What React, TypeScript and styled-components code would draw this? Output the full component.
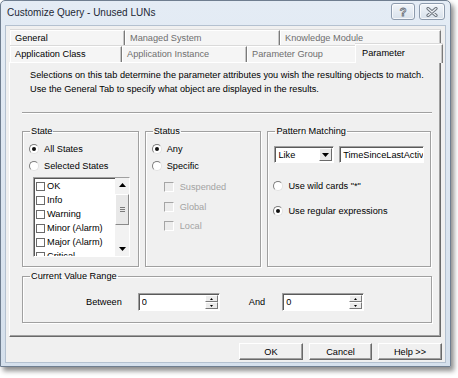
import styled, { createGlobalStyle } from 'styled-components'

const GlobalStyle = createGlobalStyle`
  body {
    margin: 0;
    background: #ffffff;
    font-family: "Liberation Sans", Arial, sans-serif;
    font-size: 9.2px;
    color: #000;
  }
`

const Page = styled.div`
  width: 458px;
  height: 378px;
  overflow: hidden;
`

const Window = styled.div`
  width: 451px;
  height: 367px;
  box-sizing: border-box;
  border: 1px solid #6f7e90;
  border-radius: 5px 5px 0 0;
  background: linear-gradient(#e4ecf5, #d5e0ec);
  box-shadow: 3px 4px 5px rgba(0, 0, 0, 0.45);
  display: flex;
  flex-direction: column;
  padding: 0 4px 3px 4px;
`

const TitleBar = styled.div`
  height: 24px;
  display: flex;
  justify-content: space-between;
  align-items: flex-start;
  padding: 0 1px 0 2px;
`

const Title = styled.div`
  font-size: 10px;
  line-height: 24px;
  color: #1d2835;
`

const CaptionButtons = styled.div`
  display: flex;
  gap: 4px;
  margin-top: 2px;
`

const CaptionButton = styled.div<{ $w: number }>`
  width: ${p => p.$w}px;
  height: 17px;
  box-sizing: border-box;
  border: 1px solid #8d9bad;
  border-radius: 3px;
  background: linear-gradient(#f1f5f9, #d8e1eb);
  box-shadow: inset 0 0 0 1px rgba(255, 255, 255, 0.7);
  display: flex;
  align-items: center;
  justify-content: center;
  font-size: 11px;
  font-weight: bold;
  color: #eef2f6;
  -webkit-text-stroke: 0.8px #6c737c;
`

const Client = styled.div`
  flex: 1;
  background: #f0f0f0;
  border: 1px solid #b4c1d0;
  padding: 4px 3px 2px 3px;
  display: flex;
  flex-direction: column;
`

const TabRow = styled.div`
  display: flex;
  height: 16px;
  margin-left: 1px;
`

const Tab = styled.div<{ $w: number; $muted?: boolean }>`
  width: ${p => p.$w}px;
  box-sizing: border-box;
  padding-left: 4px;
  background: #f5f5f5;
  border-top: 1px solid #fff;
  border-left: 1px solid #fff;
  border-right: 1px solid #7a7a7a;
  box-shadow: inset -1px 0 #c6c6c6, 0 -1px #dadada;
  line-height: 14px;
  color: ${p => (p.$muted ? '#6e6e6e' : '#000')};
  white-space: nowrap;
`

const ActiveTab = styled(Tab)`
  margin: -2px -2px -1px -2px;
  padding-left: 6px;
  height: 19px;
  background: #f0f0f0;
  line-height: 17px;
  z-index: 1;
`

const Panel = styled.div`
  width: 432px;
  height: 275px;
  box-sizing: border-box;
  background: #f0f0f0;
  border: 1px solid;
  border-color: #fff #696969 #696969 #fff;
  box-shadow: inset -1px -1px #a0a0a0;
  padding: 5px 9px 0 12px;
  display: flex;
  flex-direction: column;
`

const Description = styled.div`
  padding-left: 8px;
  line-height: 14px;
`

const Separator = styled.div`
  margin-top: 16px;
  margin-right: -1px;
  border-top: 1px solid #a0a0a0;
  border-bottom: 1px solid #fff;
`

const GroupRow = styled.div`
  display: flex;
  gap: 6px;
  margin-top: 12px;
`

const Group = styled.fieldset<{ $w: number; $h: number }>`
  width: ${p => p.$w}px;
  height: ${p => p.$h}px;
  box-sizing: border-box;
  margin: 0;
  padding: 0 6px;
  min-width: 0;
  border: 1px solid #a0a0a0;
  box-shadow: inset 1px 1px #fff, 1px 1px #fff;
`

const Legend = styled.legend`
  padding: 0 1px;
  margin-left: 1px;
  line-height: 11px;
`

const Options = styled.div<{ $gap?: number }>`
  display: flex;
  flex-direction: column;
  gap: ${p => p.$gap ?? 0}px;
  padding-top: 3px;
`

const Option = styled.div`
  display: flex;
  align-items: center;
  gap: 5px;
  height: 17px;
  white-space: nowrap;
`

const Radio = styled.span<{ $on?: boolean }>`
  width: 10px;
  height: 10px;
  flex: none;
  box-sizing: border-box;
  border-radius: 50%;
  border: 1px solid;
  border-color: #7d7d7d #e2e2e2 #e2e2e2 #7d7d7d;
  background: #fff;
  display: flex;
  align-items: center;
  justify-content: center;

  &::after {
    content: '';
    width: 4px;
    height: 4px;
    border-radius: 50%;
    background: ${p => (p.$on ? '#111' : 'transparent')};
  }
`

const ListBox = styled.div`
  margin: 3px 0 0 4px;
  width: 97px;
  height: 80px;
  box-sizing: border-box;
  background: #fff;
  border: 1px solid;
  border-color: #a0a0a0 #fff #fff #a0a0a0;
  box-shadow: inset 1px 1px #555;
  display: flex;
  overflow: hidden;
`

const ListItems = styled.div`
  flex: 1;
  padding: 1px 0 0 2px;
  overflow: hidden;
`

const ListItem = styled.div`
  display: flex;
  align-items: center;
  gap: 2px;
  height: 14px;
  white-space: nowrap;
`

const ListCheck = styled.span`
  width: 9px;
  height: 9px;
  box-sizing: border-box;
  border: 1px solid #6a6a6a;
  background: #fff;
  flex: none;
`

const ScrollBar = styled.div`
  width: 14px;
  display: flex;
  flex-direction: column;
  background: #f2f2f2;
`

const ScrollArrow = styled.div`
  height: 14px;
  display: flex;
  align-items: center;
  justify-content: center;
`

const ScrollThumb = styled.div`
  margin-top: 2px;
  height: 31px;
  box-sizing: border-box;
  border: 1px solid;
  border-color: #fff #8a8a8a #8a8a8a #fff;
  background: #e8e8e8;
  display: flex;
  align-items: center;
  justify-content: center;
`

const ScrollSpace = styled.div`
  flex: 1;
`

const Checks = styled.div`
  display: flex;
  flex-direction: column;
  gap: 5.5px;
  margin: 6px 0 0 12px;
`

const CheckRow = styled.div`
  display: flex;
  align-items: center;
  gap: 6px;
  height: 14px;
  color: #a3a3a3;
`

const CheckBox = styled.span`
  width: 10px;
  height: 10px;
  box-sizing: border-box;
  border: 1px solid;
  border-color: #a5a5a5 #fff #fff #a5a5a5;
  background: #ececec;
  flex: none;
`

const Inputs = styled.div`
  display: flex;
  gap: 5px;
  margin-top: 9px;
`

const Field = styled.div<{ $w: number }>`
  width: ${p => p.$w}px;
  height: 17px;
  box-sizing: border-box;
  background: #fff;
  border: 1px solid;
  border-color: #a0a0a0 #fff #fff #a0a0a0;
  box-shadow: inset 1px 1px #5a5a5a;
  display: flex;
  align-items: center;
  padding-left: 3px;
  overflow: hidden;
  white-space: nowrap;
`

const FieldText = styled.span`
  flex: 1;
  overflow: hidden;
`

const DropButton = styled.div`
  width: 13px;
  height: 13px;
  margin-right: 1px;
  box-sizing: border-box;
  border: 1px solid;
  border-color: #fff #6b6b6b #6b6b6b #fff;
  background: #e9e9e9;
  display: flex;
  align-items: center;
  justify-content: center;
  flex: none;
`

const PatternOptions = styled.div`
  display: flex;
  flex-direction: column;
  gap: 8px;
  margin: 14px 0 0 -1px;
`

const RangeRow = styled.div`
  display: flex;
  align-items: center;
  padding: 11px 0 0 57px;
`

const RangeLabel = styled.span<{ $gap: number }>`
  margin-left: ${p => p.$gap}px;
`

const Spin = styled(Field)<{ $gap: number }>`
  margin-left: ${p => p.$gap}px;
  height: 18px;
  padding-right: 1px;
`

const SpinButtons = styled.div`
  width: 13px;
  height: 14px;
  display: flex;
  flex-direction: column;
  gap: 0;
`

const SpinHalf = styled.div`
  flex: 1;
  box-sizing: border-box;
  border: 1px solid;
  border-color: #fff #7a7a7a #7a7a7a #fff;
  background: #ececec;
  display: flex;
  align-items: center;
  justify-content: center;
`

const ButtonRow = styled.div`
  display: flex;
  justify-content: flex-end;
  gap: 6px;
  margin-top: 6px;
`

const Button = styled.div<{ $w: number }>`
  width: ${p => p.$w}px;
  height: 17px;
  box-sizing: border-box;
  border: 1px solid;
  border-color: #fff #696969 #696969 #fff;
  box-shadow: inset -1px -1px #a0a0a0;
  background: #f0f0f0;
  display: flex;
  align-items: center;
  justify-content: center;
`

const Arrow = ({ up }: { up?: boolean }) => (
  <svg width="7" height="4" viewBox="0 0 7 4">
    <path d={up ? 'M0 4 L3.5 0 L7 4 Z' : 'M0 0 L7 0 L3.5 4 Z'} fill="#000" />
  </svg>
)

const TinyArrow = ({ up }: { up?: boolean }) => (
  <svg width="3" height="2" viewBox="0 0 3 2">
    <path d={up ? 'M0 2 L1.5 0 L3 2 Z' : 'M0 0 L3 0 L1.5 2 Z'} fill="#000" />
  </svg>
)

const Grip = () => (
  <svg width="5" height="6" viewBox="0 0 5 6">
    <path d="M0 0.5 H5 M0 2.5 H5 M0 4.5 H5" stroke="#7a7a7a" strokeWidth="1" />
  </svg>
)

const CloseGlyph = () => (
  <svg width="12" height="10" viewBox="0 0 12 10">
    <path d="M2 1.5 L10 8.5 M10 1.5 L2 8.5" stroke="#6c737c" strokeWidth="3.2" strokeLinecap="round" />
    <path d="M2 1.5 L10 8.5 M10 1.5 L2 8.5" stroke="#eef2f6" strokeWidth="1.2" strokeLinecap="round" />
  </svg>
)

const states = ['OK', 'Info', 'Warning', 'Minor (Alarm)', 'Major (Alarm)', 'Critical']

const SpinBox = ({ gap }: { gap: number }) => (
  <Spin $w={82} $gap={gap}>
    <FieldText>0</FieldText>
    <SpinButtons>
      <SpinHalf>
        <TinyArrow up />
      </SpinHalf>
      <SpinHalf>
        <TinyArrow />
      </SpinHalf>
    </SpinButtons>
  </Spin>
)

export default function App() {
  return (
    <Page>
      <GlobalStyle />
      <Window>
        <TitleBar>
          <Title>Customize Query - Unused LUNs</Title>
          <CaptionButtons>
            <CaptionButton $w={24}>?</CaptionButton>
            <CaptionButton $w={26}>
              <CloseGlyph />
            </CaptionButton>
          </CaptionButtons>
        </TitleBar>
        <Client>
          <TabRow>
            <Tab $w={115}>General</Tab>
            <Tab $w={155} $muted>Managed System</Tab>
            <Tab $w={161} $muted>Knowledge Module</Tab>
          </TabRow>
          <TabRow>
            <Tab $w={112}>Application Class</Tab>
            <Tab $w={125} $muted>Application Instance</Tab>
            <Tab $w={110} $muted>Parameter Group</Tab>
            <ActiveTab $w={88}>Parameter</ActiveTab>
          </TabRow>
          <Panel>
            <Description>
              Selections on this tab determine the parameter attributes you wish the resulting objects to match.
              <br />
              Use the General Tab to specify what object are displayed in the results.
            </Description>
            <Separator />
            <GroupRow>
              <Group $w={117} $h={141}>
                <Legend>State</Legend>
                <Options>
                  <Option>
                    <Radio $on />
                    All States
                  </Option>
                  <Option>
                    <Radio />
                    Selected States
                  </Option>
                </Options>
                <ListBox>
                  <ListItems>
                    {states.map(s => (
                      <ListItem key={s}>
                        <ListCheck />
                        {s}
                      </ListItem>
                    ))}
                  </ListItems>
                  <ScrollBar>
                    <ScrollArrow>
                      <Arrow up />
                    </ScrollArrow>
                    <ScrollThumb>
                      <Grip />
                    </ScrollThumb>
                    <ScrollSpace />
                    <ScrollArrow>
                      <Arrow />
                    </ScrollArrow>
                  </ScrollBar>
                </ListBox>
              </Group>
              <Group $w={117} $h={141}>
                <Legend>Status</Legend>
                <Options>
                  <Option>
                    <Radio $on />
                    Any
                  </Option>
                  <Option>
                    <Radio />
                    Specific
                  </Option>
                </Options>
                <Checks>
                  <CheckRow>
                    <CheckBox />
                    Suspended
                  </CheckRow>
                  <CheckRow>
                    <CheckBox />
                    Global
                  </CheckRow>
                  <CheckRow>
                    <CheckBox />
                    Local
                  </CheckRow>
                </Checks>
              </Group>
              <Group $w={164} $h={141}>
                <Legend>Pattern Matching</Legend>
                <Inputs>
                  <Field $w={60}>
                    <FieldText>Like</FieldText>
                    <DropButton>
                      <Arrow />
                    </DropButton>
                  </Field>
                  <Field $w={85}>
                    <FieldText>TimeSinceLastActivity</FieldText>
                  </Field>
                </Inputs>
                <PatternOptions>
                  <Option>
                    <Radio />
                    Use wild cards "*"
                  </Option>
                  <Option>
                    <Radio $on />
                    Use regular expressions
                  </Option>
                </PatternOptions>
              </Group>
            </GroupRow>
            <Group $w={410} $h={52} style={{ marginTop: 4 }}>
              <Legend>Current Value Range</Legend>
              <RangeRow>
                <span>Between</span>
                <SpinBox gap={16} />
                <RangeLabel $gap={29}>And</RangeLabel>
                <SpinBox gap={17} />
              </RangeRow>
            </Group>
          </Panel>
          <ButtonRow>
            <Button $w={64}>OK</Button>
            <Button $w={63}>Cancel</Button>
            <Button $w={64}>Help &gt;&gt;</Button>
          </ButtonRow>
        </Client>
      </Window>
    </Page>
  )
}
